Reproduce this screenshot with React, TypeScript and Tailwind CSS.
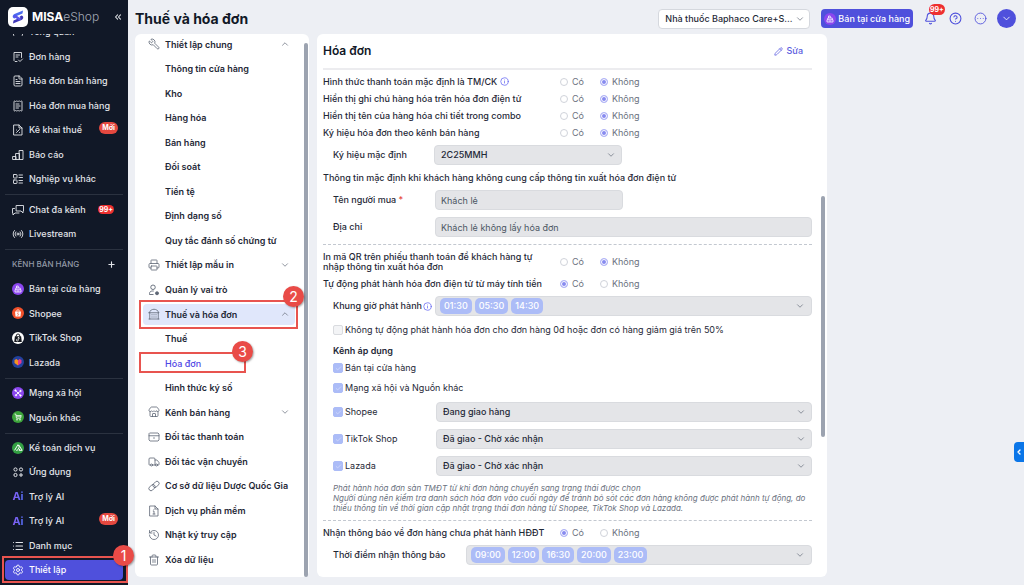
import type { ReactNode } from 'react';
import {
  Bell,
  Check,
  ChevronDown,
  ChevronLeft,
  ChevronsLeft,
  ChevronUp,
  CircleEllipsis,
  CircleQuestionMark,
  FileText,
  Gauge,
  History,
  Info,
  LayoutList,
  List,
  Pencil,
  Plus,
  Printer,
  Radio,
  ReceiptText,
  Settings,
  Store,
  Trash2,
  Truck,
  Wrench,
} from 'lucide-react';

/* ---------- Shared bits ---------- */

const Step = ({ n, className }: { n: number; className: string }) => (
  <span
    className={`absolute z-20 flex size-[21px] items-center justify-center rounded-full bg-[#e94b47] text-[14px] leading-none font-normal text-white shadow-[1px_1px_2px_rgba(0,0,0,0.35)] ${className}`}
  >
    {n}
  </span>
);

const Frame = ({ className }: { className: string }) => (
  <span className={`pointer-events-none absolute z-10 border-2 border-[#e8544f] ${className}`} />
);

const Disc = ({ className, children }: { className: string; children: ReactNode }) => (
  <span className={`flex size-3 items-center justify-center rounded-full ${className}`}>{children}</span>
);

const Glyph = ({ d, width = 1.6 }: { d: string; width?: number }) => (
  <svg
    width="12"
    height="12"
    viewBox="0 0 24 24"
    fill="none"
    stroke="currentColor"
    strokeWidth={width}
    strokeLinecap="round"
    strokeLinejoin="round"
  >
    <path d={d} />
  </svg>
);

const RegisterGlyph = () => (
  <svg width="8" height="8" viewBox="0 0 16 16" fill="none" stroke="white" strokeWidth="1.5">
    <path d="M2 9.500h12V14H2zM3.500 9.500V6h9v3.500M5 6V2h3.500v4M5.500 12h5" />
  </svg>
);

/* ---------- Left navigation ---------- */

interface NavItem {
  label: string;
  icon: ReactNode;
  badge?: 'new' | 'count';
}

const line = { size: 12, strokeWidth: 1.8 };

const AppsIcon = () => (
  <svg width="11" height="11" viewBox="0 0 22 22" fill="none" stroke="currentColor" strokeWidth="2">
    <circle cx="5" cy="5" r="3.2" />
    <circle cx="16" cy="5" r="3.2" />
    <circle cx="5" cy="16" r="3.2" />
    <path d="M16 12v8M12 16h8" />
  </svg>
);

const AiMark = () => (
  <span className="bg-linear-to-r from-[#8b5cf6] to-[#4f6ef5] bg-clip-text text-[11px] leading-none font-bold text-transparent">
    Ai
  </span>
);

const navTop: NavItem[] = [
  { label: 'Tổng quan', icon: <Gauge {...line} /> },
  { label: 'Đơn hàng', icon: <Glyph width={1.8} d="M10 21H6l-2-2V3h15v10M8 8h7M8 12h4M13 18l3 3 5-5" /> },
  { label: 'Hóa đơn bán hàng', icon: <FileText {...line} /> },
  { label: 'Hóa đơn mua hàng', icon: <ReceiptText {...line} /> },
  { label: 'Kê khai thuế', icon: <Glyph width={1.8} d="M4 2h10l6 6v14H4zM14 2v6h6M9 17l6-6M9 12v.1M15 17v.1" />, badge: 'new' },
  { label: 'Báo cáo', icon: <Glyph width={1.8} d="M2 15h6v6H2zM8 9h7v12H8zM15 3h7v18h-7z" /> },
  { label: 'Nghiệp vụ khác', icon: <LayoutList {...line} /> },
];

const navChat: NavItem[] = [
  {
    label: 'Chat đa kênh',
    icon: <Glyph width={1.8} d="M9 3h14v11h-1v4l-4-4H9zM5 9H1v9h1v4l4-4h8" />,
    badge: 'count',
  },
  { label: 'Livestream', icon: <Radio {...line} /> },
];

const navChannels: NavItem[] = [
  { label: 'Bán tại cửa hàng', icon: <Disc className="bg-[#8b46ef]"><RegisterGlyph /></Disc> },
  {
    label: 'Shopee',
    icon: (
      <Disc className="bg-[#f1502a]">
        <svg width="8" height="8" viewBox="0 0 16 16">
          <path d="M2 5h12l-1 10H3z" fill="white" />
          <path d="M5 5a3 3.500 0 0 1 6 0" fill="none" stroke="white" strokeWidth="1.4" />
          <path d="M9.500 8c-2-1.200-3.500.4-2 1.500 1.800.8 2.700 2.200.8 3-.8.2-1.500 0-2.100-.5" fill="none" stroke="#f1502a" strokeWidth="1.300" />
        </svg>
      </Disc>
    ),
  },
  {
    label: 'TikTok Shop',
    icon: (
      <Disc className="bg-white">
        <svg width="10" height="10" viewBox="0 0 16 16">
          <path d="M3 5h10l1 9.500H2z" fill="#15181f" />
          <path d="M5 5.500a3 4 0 0 1 6 0" fill="none" stroke="#15181f" strokeWidth="1.500" />
          <path d="M8.500 6.500v4.800a1.500 1.500 0 1 1-1.500-1.500M8.500 6.500c.3 1.300 1.200 1.900 2.300 2" fill="none" stroke="white" strokeWidth="1.200" />
        </svg>
      </Disc>
    ),
  },
  {
    label: 'Lazada',
    icon: (
      <Disc className="bg-[#23419c]">
        <svg width="8" height="8" viewBox="0 0 16 16">
          <path d="M1 4l4-2 3 2.500V15L1 10z" fill="#f7941d" />
          <path d="M15 4l-4-2-3 2.500V15l7-5z" fill="#e6398b" />
        </svg>
      </Disc>
    ),
  },
];

const navOther: NavItem[] = [
  {
    label: 'Mạng xã hội',
    icon: (
      <Disc className="bg-[#8b46ef]">
        <svg width="8" height="8" viewBox="0 0 16 16" stroke="white" strokeWidth="1.400" fill="white">
          <path d="M3 3l10 10M13 4 4 12" />
          <circle cx="3" cy="3" r="1.500" />
          <circle cx="13" cy="4" r="1.500" />
          <circle cx="8" cy="8" r="1.500" />
          <circle cx="4" cy="12.500" r="1.500" />
          <circle cx="13" cy="13" r="1.500" />
        </svg>
      </Disc>
    ),
  },
  {
    label: 'Nguồn khác',
    icon: (
      <Disc className="bg-[#3da43b]">
        <svg width="8" height="8" viewBox="0 0 16 16" stroke="white" strokeWidth="1.500" fill="none">
          <path d="M1 2h2.500L5 10.500h8L14.500 5H4.200M5 7.500h8.500" />
          <circle cx="6" cy="13.500" r="1" />
          <circle cx="12" cy="13.500" r="1" />
        </svg>
      </Disc>
    ),
  },
];

const navTools: NavItem[] = [
  {
    label: 'Kế toán dịch vụ',
    icon: (
      <Disc className="bg-[#33a043]">
        <svg width="9" height="9" viewBox="0 0 16 16" stroke="white" strokeWidth="1.700" fill="none">
          <path d="M1 13 7 3l2.500 4L6 13h-2M8.500 3.500 14.500 13H9l1.500-3" />
        </svg>
      </Disc>
    ),
  },
  { label: 'Ứng dụng', icon: <AppsIcon /> },
  { label: 'Trợ lý AI', icon: <AiMark /> },
  { label: 'Trợ lý AI', icon: <AiMark />, badge: 'new' },
  { label: 'Danh mục', icon: <List size={12} strokeWidth={2.2} /> },
];

const NavRows = ({ items }: { items: NavItem[] }) => (
  <>
    {items.map((item, idx) => (
      <a key={idx} href="#" className="flex min-h-0 flex-1 items-center gap-[5px] pr-[10px] pl-3">
        <span className="flex w-3 shrink-0 items-center justify-center">{item.icon}</span>
        <span className="whitespace-nowrap">{item.label}</span>
        {item.badge === 'new' && (
          <span className="mt-1 ml-auto self-start rounded-full bg-[#e5483f] px-[3px] text-[7px] leading-3 font-bold text-white">
            Mới
          </span>
        )}
        {item.badge === 'count' && (
          <span className="mr-1 ml-auto rounded-full bg-[#ee2f2f] px-px text-[7px] leading-[9px] font-bold text-white">
            99+
          </span>
        )}
      </a>
    ))}
  </>
);

const Divider = () => <hr className="mx-[5px] mt-[3px] mb-[2px] border-t border-[#2b3240]" />;

const Sidebar = () => (
  <aside className="flex w-32 shrink-0 flex-col bg-[#111827] text-[9px] font-medium text-[#e3e5ea]">
    <div className="flex h-[34px] shrink-0 items-center pl-2">
      <svg width="20" height="20" viewBox="0 0 40 40">
        <rect width="40" height="40" rx="10" fill="white" />
        <path d="M30 7 13 14c-5 2.500-4.500 8 0 9l4-2.500-2-1.500 14-6z" fill="#4a6cf0" />
        <path d="M10 33l17-7c5-2.500 4.500-8 0-9l-4 2.500 2 1.500-14 6z" fill="#4038b8" />
        <path d="M14 15l13 9-4 3-13-8z" fill="#5a55ea" />
      </svg>
      <span className="ml-1 text-[12px] font-bold text-white">MISA</span>
      <span className="text-[12px] font-light text-[#a3a8b3]">eShop</span>
      <button type="button" aria-label="Thu gọn" className="mr-[5px] ml-auto">
        <ChevronsLeft size={10} strokeWidth={2.5} />
      </button>
    </div>
    <nav className="flex min-h-0 flex-1 flex-col overflow-hidden">
      <div className="-mt-[14px] flex min-h-0 flex-1 flex-col">
        <NavRows items={navTop} />
        <Divider />
        <NavRows items={navChat} />
        <Divider />
        <div className="flex min-h-0 flex-1 items-center justify-between px-3">
          <span className="text-[8px] text-[#9299a6]">KÊNH BÁN HÀNG</span>
          <button type="button" aria-label="Thêm kênh">
            <Plus size={9} strokeWidth={3} />
          </button>
        </div>
        <NavRows items={navChannels} />
        <Divider />
        <NavRows items={navOther} />
        <Divider />
        <NavRows items={navTools} />
      </div>
    </nav>
    <div className="relative h-[27px] shrink-0 px-[5px] pt-[2px]">
      <a href="#" className="flex h-5 items-center gap-[5px] rounded bg-[#4f50dc] pl-[7px] text-white">
        <Settings {...line} />
        Thiết lập
      </a>
      <Frame className="-top-0.5 right-0 bottom-0.5 left-0.5" />
      <Step n={1} className="-top-[13px] -right-[6px]" />
    </div>
  </aside>
);

/* ---------- Settings menu ---------- */

interface MenuItem {
  label: string;
  icon?: ReactNode;
  chevron?: 'up' | 'down';
  state?: 'open' | 'current';
}

const thin = { size: 12, strokeWidth: 1.6 };

const LinkIcon = () => (
  <svg width="12" height="12" viewBox="0 0 24 24" fill="none" stroke="currentColor" strokeWidth="1.600">
    <rect x="9" y="4.500" width="14" height="8.500" rx="4.200" transform="rotate(-45 16 8.750)" />
    <rect x="1" y="11" width="14" height="8.500" rx="4.200" transform="rotate(-45 8 15.250)" />
  </svg>
);

const RoleIcon = () => (
  <svg width="12" height="12" viewBox="0 0 24 24" fill="none" stroke="currentColor" strokeWidth="1.800">
    <circle cx="10" cy="6.500" r="4.500" />
    <path d="M3 21v-2c0-3 2.500-5 5.500-5h3M3 21h8" />
    <circle cx="18" cy="18.500" r="3" fill="currentColor" />
  </svg>
);

const menu: MenuItem[] = [
  { label: 'Thiết lập chung', icon: <Wrench {...thin} className="-scale-x-100" />, chevron: 'up' },
  { label: 'Thông tin cửa hàng' },
  { label: 'Kho' },
  { label: 'Hàng hóa' },
  { label: 'Bán hàng' },
  { label: 'Đối soát' },
  { label: 'Tiền tệ' },
  { label: 'Định dạng số' },
  { label: 'Quy tắc đánh số chứng từ' },
  { label: 'Thiết lập mẫu in', icon: <Printer {...thin} />, chevron: 'down' },
  { label: 'Quản lý vai trò', icon: <RoleIcon /> },
  {
    label: 'Thuế và hóa đơn',
    icon: <Glyph d="M2 22h20M3.500 22V9.500M20.500 22V9.500M2 9.500h20C20 5 16 2.500 12 2.500S4 5 2 9.500M8 13v1M12 13v1M16 13v1M8 17.500v1M12 17.500v1M16 17.500v1" />,
    chevron: 'up',
    state: 'open',
  },
  { label: 'Thuế' },
  { label: 'Hóa đơn', state: 'current' },
  { label: 'Hình thức ký số' },
  { label: 'Kênh bán hàng', icon: <Store {...thin} />, chevron: 'down' },
  { label: 'Đối tác thanh toán', icon: <Glyph d="M4 4h16l2 2v12l-2 2H4l-2-2V6zM2 9.500h20M11 14h2" /> },
  { label: 'Đối tác vận chuyển', icon: <Truck {...thin} /> },
  { label: 'Cơ sở dữ liệu Dược Quốc Gia', icon: <LinkIcon /> },
  { label: 'Dịch vụ phần mềm', icon: <Glyph d="M4 2h10l6 6v14H4zM14 2v6h6M10.500 12H12v6M10 18h4M12 9v.1" /> },
  { label: 'Nhật ký truy cập', icon: <History {...thin} /> },
  { label: 'Xóa dữ liệu', icon: <Trash2 {...thin} /> },
];

const SettingsMenu = () => (
  <nav className="flex min-h-0 rounded-md bg-white pr-px text-[9px] font-semibold text-[#1f2937]">
    <ul className="-mt-0.5 mb-[5px] flex flex-1 flex-col pr-[9px] pl-2">
      {menu.map((item) => (
        <li key={item.label} className="flex min-h-0 flex-1 flex-col py-[2px]">
          <a
            href="#"
            className={`relative flex min-h-0 flex-1 items-center rounded px-[5px] ${
              item.state === 'open' ? 'bg-[#e0e7fb]' : ''
            } ${item.state === 'current' ? 'font-medium text-[#4f46e5]' : ''}`}
          >
            <span className="w-[17px] shrink-0 text-[#5d6675]">{item.icon}</span>
            <span className="whitespace-nowrap">{item.label}</span>
            {item.chevron === 'up' && <ChevronUp size={10} strokeWidth={1.8} className="ml-auto text-[#6b7280]" />}
            {item.chevron === 'down' && <ChevronDown size={10} strokeWidth={1.8} className="ml-auto text-[#6b7280]" />}
            {item.state === 'open' && (
              <>
                <Frame className="-inset-y-1 right-[-3px] -left-1" />
                <Step n={2} className="-top-[18px] -right-[9px]" />
              </>
            )}
            {item.state === 'current' && (
              <>
                <Frame className="-left-1 -top-px bottom-px w-[107px]" />
                <Step n={3} className="-top-[12px] left-[89px]" />
              </>
            )}
          </a>
        </li>
      ))}
    </ul>
    <div className="mt-[9px] w-1 shrink-0 rounded-full bg-[#9ca3b0]" />
  </nav>
);

/* ---------- Form controls ---------- */

const radioClass =
  'size-2 appearance-none rounded-full border border-[#d0d3da] bg-white checked:border-[#b4b7f6] checked:bg-[#888bf0] checked:shadow-[inset_0_0_0_1px_white]';

const YesNo = ({ name, label, value, info }: { name: string; label: ReactNode; value: boolean; info?: boolean }) => (
  <fieldset className="contents">
    <div className="flex items-center">
      <span className="flex w-[237px] shrink-0 items-center gap-[3px] leading-[10px]">
        {label}
        {info && <Info size={9} className="text-[#6366f1]" />}
      </span>
      <label className="flex w-10 items-center gap-1 font-normal text-[#6b7280]">
        <input type="radio" name={name} disabled defaultChecked={value} className={radioClass} />
        Có
      </label>
      <label className="flex items-center gap-1 font-normal text-[#6b7280]">
        <input type="radio" name={name} disabled defaultChecked={!value} className={radioClass} />
        Không
      </label>
    </div>
  </fieldset>
);

const fieldClass = 'h-5 w-full min-w-0 appearance-none rounded border border-[#d9dbdf] bg-[#e4e5e8]';

const Dropdown = ({ id, value, label }: { id: string; value: string; label?: string }) => (
  <span className="grid min-w-0 flex-1 items-center">
    <select id={id} aria-label={label} disabled className={`col-start-1 row-start-1 px-[6px] opacity-100 ${fieldClass}`}>
      <option>{value}</option>
    </select>
    <ChevronDown
      size={10}
      strokeWidth={1.8}
      className="pointer-events-none col-start-1 row-start-1 mr-[6px] justify-self-end text-[#6b7280]"
    />
  </span>
);

const TimeTags = ({ times, label }: { times: string[]; label: string }) => (
  <button
    type="button"
    disabled
    aria-label={label}
    className="flex h-5 min-w-0 flex-1 items-center gap-[3px] rounded border border-[#d9dbdf] bg-[#e4e5e8] pr-[6px] pl-1"
  >
    {times.map((t) => (
      <span key={t} className="rounded-[5px] bg-[#acbcf7] px-1 leading-4 text-white">
        {t}
      </span>
    ))}
    <ChevronDown size={10} strokeWidth={1.8} className="ml-auto text-[#6b7280]" />
  </button>
);

const Tick = ({ label, checked = true }: { label: string; checked?: boolean }) => (
  <label className="flex items-center gap-[2px] font-normal">
    <span className="grid items-center justify-items-center">
      <input
        type="checkbox"
        disabled
        defaultChecked={checked}
        className="col-start-1 row-start-1 size-[10px] appearance-none rounded-[2px] border border-[#d9dbdf] bg-[#f3f4f6] checked:border-[#acbcf7] checked:bg-[#acbcf7]"
      />
      {checked && <Check size={7} className="pointer-events-none col-start-1 row-start-1 text-[#e3e9fd]" />}
    </span>
    {label}
  </label>
);

const Dashes = ({ className }: { className: string }) => (
  <hr className={`border-t border-dashed border-[#c3c8d0] ${className}`} />
);

const channels = [
  { name: 'Shopee', value: 'Đang giao hàng' },
  { name: 'TikTok Shop', value: 'Đã giao - Chờ xác nhận' },
  { name: 'Lazada', value: 'Đã giao - Chờ xác nhận' },
];

const InvoicePanel = () => (
  <section className="flex min-w-0 rounded-md bg-white pl-[6px]">
    <div className="min-w-0 flex-1 text-[9px] font-medium text-[#1f2937]">
      <div className="flex h-[34px] items-center justify-between pr-[9px]">
        <h2 className="text-[12px] font-semibold text-[#111827]">Hóa đơn</h2>
        <button type="button" className="flex items-center gap-[3px] font-medium text-[#5a5ce0]">
          <Pencil size={9} strokeWidth={2} />
          Sửa
        </button>
      </div>
      <div className="border-t-2 border-[#ececef] pt-[3px]">
        <div className="grid auto-rows-[17px]">
          <YesNo name="tmck" label="Hình thức thanh toán mặc định là TM/CK" value={false} info />
          <YesNo name="note" label="Hiển thị ghi chú hàng hóa trên hóa đơn điện tử" value={false} />
          <YesNo name="combo" label="Hiển thị tên của hàng hóa chi tiết trong combo" value={false} />
          <YesNo name="symbol" label="Ký hiệu hóa đơn theo kênh bán hàng" value={false} />
        </div>
        <div className="mt-1 flex w-[299px] items-center pl-[10px]">
          <label htmlFor="kyhieu" className="w-[101px]">Ký hiệu mặc định</label>
          <Dropdown id="kyhieu" value="2C25MMH" />
        </div>
        <p className="leading-[25px]">Thông tin mặc định khi khách hàng không cung cấp thông tin xuất hóa đơn điện tử</p>
        <div className="flex w-[300px] items-center pl-[10px]">
          <label htmlFor="buyer" className="w-[102px] shrink-0">
            Tên người mua <span className="text-[#e5483f]">*</span>
          </label>
          <input id="buyer" disabled defaultValue="Khách lẻ" className={`px-[5px] font-normal text-[#4b5563] ${fieldClass}`} />
        </div>
        <div className="mt-[7px] flex items-center pl-[10px]">
          <label htmlFor="address" className="w-[102px] shrink-0">Địa chỉ</label>
          <input
            id="address"
            disabled
            defaultValue="Khách lẻ không lấy hóa đơn"
            className={`px-[5px] font-normal text-[#4b5563] ${fieldClass}`}
          />
        </div>
        <Dashes className="my-[7px]" />
        <YesNo
          name="qr"
          value={false}
          label={
            <span>
              In mã QR trên phiếu thanh toán để khách hàng tự
              <br />
              nhập thông tin xuất hóa đơn
            </span>
          }
        />
        <div className="grid auto-rows-[24px]">
          <YesNo name="auto" label="Tự động phát hành hóa đơn điện tử từ máy tính tiền" value={true} />
        </div>
        <div className="flex items-center pl-[10px]">
          <span className="flex w-[102px] shrink-0 items-center gap-px whitespace-nowrap">
            Khung giờ phát hành <Info size={9} className="text-[#6366f1]" />
          </span>
          <TimeTags label="Khung giờ phát hành" times={['01:30', '05:30', '14:30']} />
        </div>
        <div className="pl-[10px]">
          <div className="flex h-7 items-center">
            <Tick
              checked={false}
              label="Không tự động phát hành hóa đơn cho đơn hàng 0đ hoặc đơn có hàng giảm giá trên 50%"
            />
          </div>
          <h3 className="leading-[14px] font-semibold">Kênh áp dụng</h3>
          <div className="mb-1 grid auto-rows-[20px]">
            <Tick label="Bán tại cửa hàng" />
            <Tick label="Mạng xã hội và Nguồn khác" />
          </div>
          <div className="grid gap-[7px]">
            {channels.map((c) => (
              <div key={c.name} className="flex items-center">
                <div className="w-[103px] shrink-0">
                  <Tick label={c.name} />
                </div>
                <Dropdown id={c.name} label={c.name} value={c.value} />
              </div>
            ))}
          </div>
          <p className="mt-[7px] text-[8px] leading-[10px] font-normal text-[#6b7280] italic">
            Phát hành hóa đơn sàn TMĐT từ khi đơn hàng chuyển sang trạng thái được chọn
            <br />
            Người dùng nên kiểm tra danh sách hóa đơn vào cuối ngày để tránh bỏ sót các đơn hàng không được phát hành tự động, do
            <br />
            thiếu thông tin về thời gian cập nhật trạng thái đơn hàng từ Shopee, TikTok Shop và Lazada.
          </p>
        </div>
        <Dashes className="mt-[7px] mb-[5px]" />
        <YesNo name="notify" label="Nhận thông báo về đơn hàng chưa phát hành HĐĐT" value={true} />
        <div className="mt-[5px] flex items-center pl-[10px]">
          <span className="w-[133px] shrink-0">Thời điểm nhận thông báo</span>
          <TimeTags label="Thời điểm nhận thông báo" times={['09:00', '12:00', '16:30', '20:00', '23:00']} />
        </div>
      </div>
    </div>
    <div className="mt-[162px] mr-0.5 ml-[9px] h-[241px] w-1 shrink-0 rounded-full bg-[#9ca3b0]" />
  </section>
);

/* ---------- Page ---------- */

const TopBar = () => (
  <header className="flex h-[34px] shrink-0 items-center pt-[3px] pr-2 text-[9px] font-medium text-[#1f2937]">
    <h1 className="text-[14px] font-bold text-[#111827]">Thuế và hóa đơn</h1>
    <span className="mr-[11px] ml-auto grid w-[152px] items-center">
      <select
        aria-label="Cửa hàng"
        className="col-start-1 row-start-1 h-5 appearance-none rounded border border-[#d5d8de] bg-white px-[6px]"
      >
        <option>Nhà thuốc Baphaco Care+S...</option>
      </select>
      <ChevronDown
        size={10}
        strokeWidth={1.8}
        className="pointer-events-none col-start-1 row-start-1 mr-[5px] justify-self-end text-[#6b7280]"
      />
    </span>
    <button
      type="button"
      className="flex h-[19px] items-center gap-[2px] rounded bg-[#4f50dc] px-[3px] whitespace-nowrap text-white"
    >
      <Disc className="bg-[#8b46ef]"><RegisterGlyph /></Disc>
      Bán tại cửa hàng
    </button>
    <div className="mr-[10px] ml-[11px] flex items-center gap-3 text-[#4f50dc]">
      <button type="button" aria-label="Thông báo" className="relative">
        <Bell size={13} />
        <span className="absolute -top-2 left-[5px] rounded-full bg-[#ee2f2f] px-px text-[7px] leading-[11px] font-bold text-white">
          99+
        </span>
      </button>
      <button type="button" aria-label="Trợ giúp"><CircleQuestionMark size={13} /></button>
      <button type="button" aria-label="Thêm"><CircleEllipsis size={13} strokeWidth={1.6} /></button>
    </div>
    <button
      type="button"
      aria-label="Tài khoản"
      className="flex size-[19px] items-center justify-center rounded-full bg-[#4f50dc] text-white"
    >
      <ChevronDown size={11} strokeWidth={1.8} />
    </button>
  </header>
);

export default function App() {
  return (
    <div className="relative flex h-screen overflow-hidden bg-[#edeff4] font-['Inter',sans-serif]">
      <Sidebar />
      <main className="flex min-w-0 flex-1 flex-col pb-2 pl-[7px]">
        <TopBar />
        <div className="grid min-h-0 flex-1 grid-cols-[174px_minmax(0,1fr)] gap-2 pr-[197px]">
          <SettingsMenu />
          <InvoicePanel />
        </div>
      </main>
      <button
        type="button"
        aria-label="Mở bảng bên"
        className="absolute top-[442px] right-0 flex h-5 w-[10px] items-center justify-center rounded-l-sm bg-[#0b76e8] text-white"
      >
        <ChevronLeft size={8} strokeWidth={4} />
      </button>
    </div>
  );
}
